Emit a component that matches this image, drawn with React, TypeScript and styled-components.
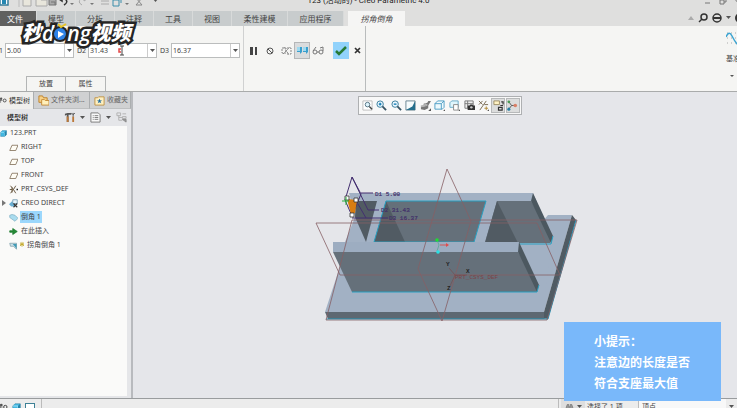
import React from "react";
import styled, { createGlobalStyle, css } from "styled-components";

const Global = createGlobalStyle`
  *{box-sizing:border-box}
  body{margin:0;overflow:hidden;background:#e5e6ea;color:#444;
    font:7px/12px "Noto Sans","Noto Sans CJK SC",sans-serif}
  button,input,select{font:inherit;color:inherit;margin:0;padding:0}
  button{border:0;background:none;display:flex;align-items:center;justify-content:center;white-space:nowrap}
  svg{display:block;flex:none}
`;
const Page = styled.div`height:100vh;display:flex;flex-direction:column;overflow:hidden;`;
const TitleBar = styled.header`
  flex:none;height:21px;margin-top:-10px;background:#dfdfde;display:grid;
  grid-template-columns:1fr auto 1fr;align-items:center;color:#222;
`;
const QuickTools = styled.div`display:flex;align-items:center;gap:5px;`;
const TitleText = styled.div`font:8px/12px Roboto,"Noto Sans CJK SC",sans-serif;white-space:nowrap;`;
const WindowControls = styled.div`display:flex;justify-content:flex-end;gap:4px;`;
const TabBar = styled.nav`flex:none;height:15px;display:flex;background:#dfdfde;`;
const Tab = styled.button<{ $wide?: boolean; $kind?: "file" | "active" }>`
  flex:none;width:${p => (p.$wide ? 56 : 39)}px;border-right:1px solid #d8dada;background:#c8cccd;font-size:8px;
  ${p => p.$kind === "file" && css`width:37px;background:#60605f;color:#fff;padding-right:6px;`}
  ${p => p.$kind === "active" && css`width:57px;margin-left:4px;background:#f5f5f4;font-style:italic;border:0;`}
`;
const TabTools = styled.div`flex:1;display:flex;justify-content:flex-end;align-items:center;gap:4px;overflow:hidden;padding-bottom:1px;`;
const Ribbon = styled.section`
  flex:none;height:66px;background:#f5f5f3;border-bottom:1px solid #a9abab;display:flex;overflow:hidden;
`;
const Parameters = styled.div`flex:none;width:244px;border-right:1px solid #d0d1d1;display:flex;flex-direction:column;justify-content:space-between;`;
const Fields = styled.div`display:flex;margin:17px 0 0 -6px;gap:3px;`;
const Field = styled.div`display:flex;align-items:center;gap:1px;label{width:10px;}`;
const Combo = styled.div`
  position:relative;display:flex;width:69px;height:15px;border:1px solid #bbbdbd;background:#fff;
  input{width:59px;border:0;border-right:1px solid #ccc;outline:0;background:transparent;padding-left:1px;min-width:0;}
  button{width:8px;}
`;
const TextCursor = styled.svg`position:absolute;left:28px;top:1px;`;
const Panels = styled.div`display:flex;margin-left:26px;`;
const PanelTab = styled.button`width:40px;height:15px;border:1px solid #b3b5b5;border-bottom:0;&+&{border-left:0;}`;
const Actions = styled.div`flex:none;width:122px;border-right:1px solid #b9bcbc;display:flex;align-items:flex-start;padding:16px 0 0 2px;`;
const ActionButton = styled.button<{ $state?: "pressed" | "confirm" }>`
  width:16px;height:17px;
  ${p => p.$state === "pressed" && css`background:#dadcdd;border:1px solid #b5b7b8;`}
  ${p => p.$state === "confirm" && css`background:#91d2fb;margin-left:7px;`}
`;
const RibbonEnd = styled.div`flex:1;display:flex;justify-content:flex-end;overflow:hidden;`;
const Datum = styled.button`width:11px;flex-direction:column;align-items:flex-start;justify-content:flex-start;padding-top:5px;gap:5px;`;
const Workspace = styled.main`flex:1;min-height:0;display:flex;`;
const Sidebar = styled.aside`flex:none;width:133px;border-right:2px solid #b8babe;background:#e5e6e9;display:flex;flex-direction:column;`;
const SideTabs = styled.div`flex:none;display:flex;height:17px;`;
const SideTab = styled.button<{ $w: number; $active?: boolean }>`
  flex:none;width:${p => p.$w}px;gap:2px;justify-content:flex-start;overflow:hidden;
  background:${p => (p.$active ? "#efefed" : "#d0d1d2")};color:${p => (p.$active ? "#333" : "#666")};
  border-right:1px solid #abaeb0;border-bottom:${p => (p.$active ? "0" : "1px solid #bec0c1")};
  padding-left:${p => (p.$active ? 0 : 4)}px;
`;
const TreeHeader = styled.div`flex:none;height:17px;display:flex;align-items:center;padding:0 4px 0 7px;gap:5px;strong{font-weight:500;margin-right:auto;color:#222;}`;
const Tree = styled.ul`list-style:none;margin:0 4px 2px 0;padding:0;background:#fafaf9;flex:1;min-height:0;`;
const TreeItem = styled.li<{ $root?: boolean; $selected?: boolean }>`
  height:14px;display:flex;align-items:center;gap:2px;padding-left:${p => (p.$root ? 0 : 1)}px;
  span{padding:0 1px;background:${p => (p.$selected ? "#9bd7fc" : "none")};white-space:nowrap;}
`;
const Expander = styled.div`width:6px;`;
const Viewport = styled.section`flex:1;min-width:0;min-height:0;position:relative;background:#e5e6ea;`;
const Model = styled.svg`width:100%;height:100%;`;
const FloatingTools = styled.div`
  position:absolute;left:225px;top:4px;width:164px;height:19px;display:flex;align-items:center;justify-content:space-between;
  border:1px solid #aeb0b2;background:#f8f8f8;padding:0 1px;
`;
const ViewButton = styled.button<{ $pressed?: boolean }>`
  width:14px;height:15px;border:1px solid ${p => (p.$pressed ? "#b7b9ba" : "transparent")};
  background:${p => (p.$pressed ? "#dcdddd" : "none")};
`;
const Tip = styled.aside`
  position:absolute;right:16px;bottom:7px;width:157px;height:79px;background:#79b8fa;color:#fff;
  padding:9px 0 0 30px;font-size:12px;line-height:21px;font-weight:700;white-space:nowrap;z-index:2;
  p{margin:0;}
`;
const Status = styled.footer`
  flex:none;height:10px;border-top:1px solid #999c9e;background:#ececec;display:flex;align-items:flex-start;overflow:hidden;
`;
const StatusTools = styled.div`display:flex;gap:4px;width:42px;border-right:1px solid #bbb;height:10px;padding-top:4px;`;
const Selection = styled.div`
  margin-left:auto;display:flex;height:16px;border-left:1px solid #bbb;padding-left:2px;
  output{width:54px;border-right:1px solid #bbb;padding:2px;white-space:nowrap;}
`;
const FindButton = styled.button`width:24px;height:16px;background:#dedede;gap:3px;`;
const Filter = styled.select`width:87px;height:16px;border:0;background:#f8f8f8;padding:0 3px;appearance:none;`;
const FilterArrow = styled.span`width:11px;padding:6px 3px;`;
const Watermark = styled.div`
  position:absolute;left:22px;top:17px;height:32px;display:flex;align-items:center;z-index:3;
  font:italic 800 20px/28px "Noto Sans","Noto Sans CJK SC",sans-serif;color:#fff;
  -webkit-text-stroke:5px #252525;paint-order:stroke fill;
`;
const Latin = styled.span`font:italic 600 21px/28px "Open Sans",sans-serif;`;

const Arrow = () => (
  <svg width="5" height="4" viewBox="0 0 5 4"><path d="M0 0h5L2.500 3z" fill="#555" /></svg>
);

type Kind = "plane" | "cube" | "csys" | "direct" | "chamfer" | "insert" | "corner" | "folders" | "star" | "tree" | "tools" | "list" | "filter"
  | "fit" | "in" | "out" | "refit" | "saved" | "style" | "views" | "camera" | "datum" | "note" | "spin" | "bino";
const shapes: Record<Kind, React.ReactNode> = {
  plane: <path d="M4 3h8l-3 7H1z" fill="#fffdf5" stroke="#75634b" />,
  cube: <><path d="M1 4l3-3h7v7l-3 3H1z" fill="#42b8e2" stroke="#337a99" strokeWidth=".7" /><path d="M1 4h7v7" fill="none" stroke="#b9edff" /><path d="M8 4l3-3v7L8 11z" fill="#2582a8" /></>,
  csys: <><path d="M2 1l4 5-4 5M9 1L6 6l3 5M1 6h4M4 3v7" fill="none" stroke="#6b5a43" strokeWidth="1.300" /><path d="M10 6h2" stroke="#222" strokeWidth="2" /></>,
  direct: <><path d="M0 7l4-4 4 3v4H3z" fill="#69afd3" /><path d="M5 1h6v5H5z" fill="#e8f4fa" stroke="#6791aa" /><path d="M6 6l5 5m0-5l-5 5" stroke="#333" strokeWidth="1.500" /></>,
  chamfer: <path d="M1 3l3-1 4 1 4 4-4 4-7-5z" fill="#a9dcef" stroke="#82b2c4" />,
  insert: <path d="M1 5h4V2l6 4-6 4V7H1z" fill="#258a36" stroke="#16752a" />,
  corner: <><path d="M1 3h9v8L6 7H2z" fill="#cce0e8" stroke="#7b9da8" /><path d="M5 4h5v6z" fill="#409bb7" /></>,
  folders: <><path d="M1 1h4l1 2h4v5H1z" fill="#f8d289" stroke="#bc7f24" /><path d="M4 5h3l1 1h4v5H4z" fill="#fff0bb" stroke="#c48936" /></>,
  star: <><path d="M1 3h3l1-1h6v9H1z" fill="#fff0c1" stroke="#bd9245" /><path d="M6 4l1 2h2L7 7l1 2-2-1-2 1 1-2-2-1h2z" fill="#1f6da1" /></>,
  tree: <><path d="M0 6h4M1 2v8" stroke="#555" /><circle cx="2" cy="3" r="2" fill="#555" /><circle cx="8" cy="6" r="2.500" fill="none" stroke="#444" strokeWidth="1.500" /></>,
  tools: <><path d="M1 2l3-1h4v2H5v8H3V3L1 4z" fill="#555" /><path d="M3 5h2v6H3zM9 5h2v6H9z" fill="#bc7838" /><path d="M10 1v4M8 1l2 2 2-2" stroke="#555" fill="none" /></>,
  list: <><path d="M1 1h8l2 2v8H1z" fill="#f9f9f9" stroke="#777" /><path d="M3 4h1m1 0h4M3 6h1m1 0h4M3 8h1m1 0h4" stroke="#777" /></>,
  filter: <><path d="M1 1h4v3H1zM3 4v5h4M3 6h4M7 2h4M7 5h4v2H7z" fill="none" stroke="#b0b0b0" /><path d="M7 8h4v3z" fill="#999" stroke="#888" /></>,
  fit: <><path d="M1 1h10v10H1z" fill="#fff" stroke="#bbb" /><circle cx="6" cy="5" r="2.500" fill="#ddf3fb" stroke="#527080" /><path d="M8 7l3 3" stroke="#444" strokeWidth="1.500" /></>,
  in: <><circle cx="4.500" cy="4.500" r="3.500" fill="#eaf7ff" stroke="#347999" /><path d="M7 7l4 4" stroke="#385464" strokeWidth="2" /><path d="M3 4.500h3M4.500 3v3" stroke="#167db4" strokeWidth="1.500" /></>,
  out: <><circle cx="4.500" cy="4.500" r="3.500" fill="#eaf7ff" stroke="#347999" /><path d="M7 7l4 4" stroke="#385464" strokeWidth="2" /><path d="M3 4.500h3" stroke="#167db4" strokeWidth="1.500" /></>,
  refit: <><path d="M1 1h10v10H1z" fill="#f6fbfc" stroke="#67828e" /><path d="M11 1v10H1l7-4z" fill="#246e8c" /></>,
  saved: <><path d="M1 10V7h3V4l4-1 1-2h3L9 6v3l-4 2z" fill="#777" /><path d="M1 7l5-1M5 4l3 2" stroke="#b4b4b4" strokeWidth="2" /><path d="M12 9v3H9z" fill="#555" /></>,
  style: <><path d="M1 4l3-3h7v7l-2 2H1z" fill="#eef9fd" stroke="#4b9bc3" /><path d="M1 4h7v6m0-6l3-3" fill="none" stroke="#4b9bc3" /><path d="M12 10v2h-2z" fill="#555" /></>,
  views: <><path d="M1 3l2-2h7v7H1z" fill="#dff5fc" stroke="#66a9c6" /><path d="M5 5h5v6H5z" fill="#fff" stroke="#888" /><path d="M12 10v2h-2z" fill="#555" /></>,
  camera: <><path d="M1 1h9v8H1zM1 4h9M4 1v8" fill="#eee" stroke="#777" /><path d="M4 6h2l1-1h2l1 1h2v5H4z" fill="#333" /><circle cx="8" cy="8" r="1.300" fill="#ccc" /></>,
  datum: <><path d="M1 1l4 4M1 5l4-4M2 11l7-10M7 5h4" fill="none" stroke="#74654d" /><path d="M7 9h4M9 7v4" stroke="#b08834" /><path d="M12 10v2h-2z" fill="#555" /></>,
  note: <><path d="M1 1h6v4H1z" fill="#fff3c4" stroke="#9b8c64" /><path d="M9 2h2v3M8 6h3M6 8h4v3H6z" fill="none" stroke="#333" strokeWidth="1.300" /></>,
  spin: <><path d="M2 2l3 4h5M5 6l-3 4" stroke="#555" fill="none" /><circle cx="2" cy="2" r="1.500" fill="#4a9b55" /><circle cx="2" cy="10" r="1.700" fill="#277fa3" /><circle cx="9" cy="6" r="2" fill="#d98067" /></>,
  bino: <path d="M1 8l2-6h2v3h2V2h2l2 6v3H7V7H5v4H1z" fill="#999" stroke="#777" />,
};
const Icon = ({ k, size = 11 }: { k: Kind; size?: number }) => (
  <svg width={size} height={size} viewBox="0 0 12 12" aria-hidden="true">{shapes[k]}</svg>
);

const fields = [["D1", "5.00"], ["D2", "31.43"], ["D3", "16.37"]];
const menus: [string, boolean][] = [["模型", false], ["分析", false], ["注释", false], ["工具", false], ["视图", false], ["柔性建模", true], ["应用程序", true]];
const items: [Kind, string][] = [["plane", "RIGHT"], ["plane", "TOP"], ["plane", "FRONT"], ["csys", "PRT_CSYS_DEF"], ["direct", "CREO DIRECT"], ["chamfer", "倒角 1"], ["insert", "在此插入"], ["corner", "拐角倒角 1"]];
const views: [Kind, string][] = [["fit", "重新调整"], ["in", "放大"], ["out", "缩小"], ["refit", "重画"], ["saved", "渲染"], ["style", "显示样式"], ["views", "已保存方向"], ["camera", "视图管理器"], ["datum", "基准显示"], ["note", "注释显示"], ["spin", "旋转中心"]];

const Drawing = () => (
  <Model viewBox="133 92 604 306" preserveAspectRatio="xMinYMin meet" role="img" aria-label="三维模型">
    <path d="M325 312L350 236H530L548 215H572L544 312Z" fill="#a2b1c4" />
    <path d="M349 193H533L552 236L545 292H345V242L355 217Z" fill="#a2b1c4" />
    <path d="M572 215L576 220L548 319L544 318V312Z" fill="#505b63" />
    <path d="M325 312H544V318L547 319H328Z" fill="#5d6872" />
    <path d="M326 319H548L576 220" fill="none" stroke="#2596b8" />
    <path d="M356 201H377L366 242L355 217Z" fill="#515b63" />
    <path d="M386 201H486L474 242H374Z" fill="#65707a" />
    <path d="M386 201L405 242H374Z" fill="#515b63" />
    <path d="M386 201H486L474 242H374Z" fill="none" stroke="#28a0c1" />
    <path d="M497 201H531L552 238L550 243H518L485 242Z" fill="#65707a" />
    <path d="M497 201L518 243H485Z" fill="#515b63" />
    <path d="M533 193L553 236L551 243L531 201Z" fill="#4c5860" />
    <path d="M519 244H551L553 236" fill="none" stroke="#28a0c1" />
    <path d="M333 242H519V252H333Z" fill="#9dadc1" />
    <path d="M333 252H518L538 286L537 292H352Z" fill="#65707a" />
    <path d="M519 242L539 285L537 292L518 252Z" fill="#4c5860" />
    <path d="M352 292H537L539 285" fill="none" stroke="#28a0c1" />
    <g fill="none" stroke="#875f64" strokeWidth=".8">
      <path d="M316 223H537L560 275H340ZM447 169L471 221L442 321L418 269ZM352 220H577L547 320H326Z" />
    </g>
    <g fill="none" stroke="#442f70">
      <path d="M352 177L345 200L352 216L361 194L352 177L368 210H379M361 193H373M358 204L366 218M352 218H388" />
    </g>
    <path d="M347 199L357 200L355 213L351 214Z" fill="#d87d12" />
    <g fill="#fff" stroke="#333" strokeWidth=".8"><path d="M345 196h4v4h-4zM354 198h4v4h-4zM350 213h4v4h-4z" /></g>
    <path d="M342 201H349M346 197V205" stroke="#28b33c" />
    <g fontFamily="Liberation Mono, monospace" fontSize="6" fill="#42306a" stroke="#42306a" strokeWidth=".2">
      <text x="375" y="196">D1 5.00</text><text x="381" y="212">D2 31.43</text><text x="389" y="220">D3 16.37</text>
    </g>
    <g fontFamily="Liberation Mono, monospace" fontSize="6" fontWeight="700" fill="#222">
      <text x="446" y="266">Y</text><text x="466" y="273">X</text><text x="447" y="290">Z</text>
    </g>
    <text x="455" y="279" fontFamily="Liberation Mono, monospace" fontSize="6" fill="#7d4347">PRT_CSYS_DEF</text>
    <path d="M455 275L449 268M455 275L450 286M455 275H467" stroke="#774d51" strokeWidth=".7" />
    <path d="M437 240L439 245L437 251" fill="none" stroke="#67a9a0" />
    <path d="M440 245H447" stroke="#d75252" /><path d="M446 243l3 2-3 2z" fill="#e04c4c" />
    <circle cx="437" cy="240" r="1.800" fill="#20db36" /><circle cx="438" cy="252" r="1.800" fill="#28e2e5" />
  </Model>
);

export default function App() {
  return (
    <Page>
      <Global />
      <TitleBar>
        <QuickTools>
          <svg width="9" height="12" viewBox="0 0 9 12"><path d="M0 2h8v8H0z" fill="#f8fcff" stroke="#397e9b" strokeWidth="1.500" /><path d="M2 5h4v4H2z" fill="#2486b1" /></svg>
          <svg width="134" height="12" viewBox="0 0 134 12" fill="none" stroke="#777">
            <path d="M5 0v12" stroke="#bbb" /><path d="M9 1h5l3 2v8H9zM22 3h4l1 2h6v6H22z" fill="#e8e6dc" stroke="#aaa" />
            <path d="M35 2h7v8H35zM37 7h4v3" fill="#aaa" />
            <path d="M45 4l3-2v4zM47 4h4q4 3-1 6" stroke="#333" strokeWidth="1.500" />
            <path d="M73 4l-3-2v4zM71 4h-4q-4 3 1 6" stroke="#aaa" />
            <path d="M87 3h8M87 6h8M87 9h8" stroke="#aaa" /><path d="M99 5h6v6h-6zM102 2h5v6" stroke="#3b8daa" />
            <path d="M122 3l6 7h-6l6-7z" stroke="#888" /><path d="M56 8h4l-2 2zM76 8h4l-2 2zM111 8h4l-2 2z" fill="#777" stroke="none" />
          </svg>
          <Arrow />
        </QuickTools>
        <TitleText>123 (活动的) - Creo Parametric 4.0</TitleText>
        <WindowControls>
          <svg width="34" height="12" viewBox="0 0 34 12" fill="none" stroke="#777"><path d="M2 8h5M17 5h4v4h-4zM19 5V3h4v4h-2M31 3l5 6" /></svg>
        </WindowControls>
      </TitleBar>
      <TabBar>
        <Tab $kind="file">文件</Tab>
        {menus.map(([m, w]) => <Tab key={m} $wide={w}>{m}</Tab>)}
        <Tab $kind="active">拐角倒角</Tab>
        <TabTools>
          <svg width="6" height="4" viewBox="0 0 6 4"><path d="M0 4l3-4 3 4" fill="#aaa" /></svg>
          <svg width="10" height="10" viewBox="0 0 10 10" fill="none" stroke="#333" strokeWidth="1.500"><circle cx="6" cy="4" r="3" /><path d="M4 6L1 9" /></svg>
          <svg width="10" height="10" viewBox="0 0 10 10" fill="none" stroke="#333" strokeWidth="1.500"><circle cx="5" cy="5" r="4" /><path d="M1 5h8" strokeWidth="2" /></svg>
          <Arrow />
          <svg width="2" height="10" viewBox="0 0 2 10"><circle cx="5" cy="5" r="5" fill="#333" /></svg>
        </TabTools>
      </TabBar>
      <Ribbon>
        <Parameters>
          <Fields>
            {fields.map(([l, v]) => (
              <Field key={l}>
                <label htmlFor={l}>{l}</label>
                <Combo>
                  <input id={l} defaultValue={v} />
                  <button aria-label={l + " 列表"}><Arrow /></button>
                  {l === "D2" && <TextCursor width="8" height="11" viewBox="0 0 8 11" fill="none"><path d="M4 4H2v3h2" stroke="#e34848" strokeWidth="1.500" /><path d="M3 1h4M5 1v9M3 10h4" stroke="#444" /></TextCursor>}
                </Combo>
              </Field>
            ))}
          </Fields>
          <Panels><PanelTab>放置</PanelTab><PanelTab>属性</PanelTab></Panels>
        </Parameters>
        <Actions>
          <ActionButton aria-label="暂停"><svg width="8" height="8" viewBox="0 0 8 8"><path d="M0 0h3v8H0zM5 0h2v8H5z" fill="#444" /></svg></ActionButton>
          <ActionButton aria-label="无预览"><svg width="8" height="8" viewBox="0 0 8 8" fill="none" stroke="#555"><circle cx="4" cy="4" r="3" /><path d="M2 2l4 4" /></svg></ActionButton>
          <ActionButton aria-label="分离"><svg width="11" height="10" viewBox="0 0 11 10" fill="none" stroke="#888"><path d="M1 2h4v5H1zM6 2h4v6H5M2 8l7-7M3 1l5 8" strokeDasharray="2 1" /></svg></ActionButton>
          <ActionButton $state="pressed" aria-label="连接"><svg width="11" height="9" viewBox="0 0 11 9"><path d="M0 1h5v5L3 8V6H0zM6 1h5v5L9 8V6H6z" fill="#3a9fcd" /><path d="M0 1h3v4H0zM6 1h3v4H6z" fill="#9edaf0" /></svg></ActionButton>
          <ActionButton aria-label="预览"><svg width="12" height="9" viewBox="0 0 12 9" fill="none" stroke="#777"><circle cx="3" cy="6" r="2" /><circle cx="9" cy="6" r="2" /><path d="M1 5l3-4M11 5V1L8 2M5 6h2" /></svg></ActionButton>
          <ActionButton $state="confirm" aria-label="确定"><svg width="12" height="10" viewBox="0 0 12 10"><path d="M1 5l3 3 7-7" fill="none" stroke="#267a35" strokeWidth="2.500" /></svg></ActionButton>
          <ActionButton aria-label="取消"><svg width="7" height="7" viewBox="0 0 7 7"><path d="M1 1l5 5m0-5L1 6" stroke="#333" strokeWidth="1.700" /></svg></ActionButton>
        </Actions>
        <RibbonEnd>
          <Datum><svg width="11" height="17" viewBox="0 0 11 17"><path d="M1 2h12M1 7h12M1 12h12" stroke="#aaa" strokeDasharray="1 3" /><path d="M0 6Q3-1 6 5T12 14" fill="none" stroke="#3ba4d2" strokeWidth="1.500" /></svg><span>基准</span><svg width="11" height="11" viewBox="0 0 11 11"><path d="M4 5h4l-2 2z" fill="#555" /></svg></Datum>
        </RibbonEnd>
      </Ribbon>
      <Workspace>
        <Sidebar>
          <SideTabs>
            <SideTab $w={34} $active><Icon k="tree" size={7} />模型树</SideTab>
            <SideTab $w={56}><Icon k="folders" />文件夹浏...</SideTab>
            <SideTab $w={41}><Icon k="star" />收藏夹</SideTab>
          </SideTabs>
          <TreeHeader><strong>模型树</strong><Icon k="tools" /><Arrow /><Icon k="list" /><Arrow /><Icon k="filter" /></TreeHeader>
          <Tree>
            <TreeItem $root><Icon k="cube" size={7} /><span>123.PRT</span></TreeItem>
            {items.map(([k, t]) => (
              <TreeItem key={t} $selected={k === "chamfer"}>
                <Expander>{k === "direct" && <svg width="5" height="6" viewBox="0 0 5 6"><path d="M1 0l4 3-4 3z" fill="#777" /></svg>}</Expander>
                <Icon k={k} size={9} />
                {k === "corner" && <svg width="4" height="9" viewBox="0 0 5 9"><path d="M0 1l5 4M5 1L0 5M2.500 0v6M0 3h5" stroke="#c1a622" /></svg>}
                <span>{t}</span>
              </TreeItem>
            ))}
          </Tree>
        </Sidebar>
        <Viewport>
          <Drawing />
          <FloatingTools role="toolbar">
            {views.map(([k, l], i) => <ViewButton key={k} aria-label={l} $pressed={i > 8}><Icon k={k} size={11} /></ViewButton>)}
          </FloatingTools>
        </Viewport>
      </Workspace>
      <Status>
        <StatusTools><Icon k="tree" size={8} /><Icon k="cube" size={9} /><svg width="10" height="8" viewBox="0 0 10 8"><path d="M0 0h10v8H0z" fill="#fff" stroke="#3e8196" strokeWidth="2" /></svg></StatusTools>
        <Selection><FindButton aria-label="查找"><Icon k="bino" size={9} /><Arrow /></FindButton><output>选择了 1 项</output><Filter aria-label="选择过滤器"><option>顶点</option></Filter><FilterArrow><Arrow /></FilterArrow></Selection>
      </Status>
      <Tip><p>小提示：</p><p>注意边的长度是否</p><p>符合支座最大值</p></Tip>
      <Watermark>
        <span>秒</span><Latin>d</Latin>
        <svg width="13" height="24" viewBox="0 0 13 24" overflow="visible"><circle cx="6" cy="13" r="8" fill="#252525" /><circle cx="6" cy="13" r="6" fill="#2c82e8" /><path d="M4 10l6 3-6 4z" fill="#fff" /><path d="M4 3l3 3 5-3" fill="none" stroke="#e8c426" strokeWidth="2" /></svg>
        <Latin>ng</Latin><span>视频</span>
      </Watermark>
    </Page>
  );
}
